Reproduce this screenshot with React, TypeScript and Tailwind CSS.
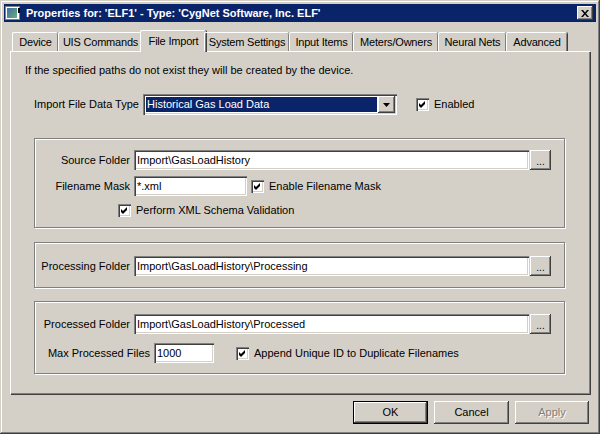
import React from "react";

const raised =
  "bg-[#d4d0c8] shadow-[inset_-1px_-1px_0_#404040,inset_1px_1px_0_#ffffff,inset_-2px_-2px_0_#808080,inset_2px_2px_0_#d4d0c8]";
const sunken =
  "bg-white shadow-[inset_1px_1px_0_#808080,inset_2px_2px_0_#404040,inset_-1px_-1px_0_#ffffff,inset_-2px_-2px_0_#d4d0c8]";

function CheckBox() {
  return (
    <div className={`w-[13px] h-[13px] shrink-0 flex items-center justify-center ${sunken}`}>
      <svg width="7" height="7" viewBox="0 0 7 7">
        <path d="M0 2 L2 4 L6 0 L6 3 L2 7 L0 5 Z" fill="#000" />
      </svg>
    </div>
  );
}

function TextBox({ value, w }: { value: string; w: string }) {
  return (
    <div className={`${w} h-[20px] ${sunken} flex items-center pl-[3px] text-black whitespace-nowrap`}>
      {value}
    </div>
  );
}

function Browse() {
  return (
    <div className={`ml-[1px] w-[21px] h-[20px] ${raised} flex items-end justify-center pb-[3px] text-[10px] leading-none`}>
      ...
    </div>
  );
}

function Label({ text, w = "w-[99px]" }: { text: string; w?: string }) {
  return <div className={`${w} text-right pr-[4px] whitespace-nowrap`}>{text}</div>;
}

const tabs = [
  { name: "Device", w: "w-[46px]" },
  { name: "UIS Commands", w: "w-[84px]" },
  { name: "File Import", w: "w-[62px]", active: true },
  { name: "System Settings", w: "w-[85px]" },
  { name: "Input Items", w: "w-[64px]" },
  { name: "Meters/Owners", w: "w-[85px]" },
  { name: "Neural Nets", w: "w-[68px]" },
  { name: "Advanced", w: "w-[61px]" },
];

const group =
  "ml-[23px] w-[531px] border border-[#808080] shadow-[inset_1px_1px_0_#ffffff,1px_1px_0_#ffffff]";

export default function App() {
  return (
    <div className="w-[600px] h-[434px] bg-[#d4d0c8] p-[4px] flex flex-col text-[11px] leading-[13px] text-black font-['Liberation_Sans',Arial,sans-serif] shadow-[inset_-1px_-1px_0_#404040,inset_1px_1px_0_#d4d0c8,inset_-2px_-2px_0_#808080,inset_2px_2px_0_#ffffff]">
      {/* Title bar */}
      <div className="h-[18px] bg-[#0a246a] flex items-center pl-[1px] pr-[3px]">
        <svg width="16" height="16" viewBox="0 0 16 16" className="shrink-0">
          <rect x="0.5" y="1.5" width="14" height="13" fill="#fff" stroke="#808080" />
          <rect x="2" y="3" width="10" height="10" fill="url(#g)" />
          <rect x="13" y="3" width="2" height="5" fill="#000" />
          <defs>
            <linearGradient id="g" x1="0" y1="0" x2="1" y2="1">
              <stop offset="0" stopColor="#3a6ea5" />
              <stop offset="1" stopColor="#6fae7a" />
            </linearGradient>
          </defs>
        </svg>
        <div className="ml-[5px] text-white font-bold whitespace-nowrap">
          Properties for: 'ELF1' - Type: 'CygNet Software, Inc. ELF'
        </div>
        <div className={`ml-auto w-[16px] h-[14px] ${raised} flex items-center justify-center`}>
          <svg width="8" height="7" viewBox="0 0 8 7">
            <path d="M0 0h2l2 2.5L6 0h2L5 3.5 8 7H6L4 4.5 2 7H0l3-3.5z" fill="#000" />
          </svg>
        </div>
      </div>

      {/* Tabs */}
      <div className="mt-[8px] ml-[6px] h-[21px] flex items-end pl-[2px] relative z-10 tracking-[-0.2px]">
        {tabs.map((t) =>
          t.active ? (
            <div
              key={t.name}
              className="-mx-[2px] -mb-[1px] w-[66px] h-[22px] bg-[#d4d0c8] border-t border-l border-white shadow-[inset_-1px_0_0_#808080,1px_0_0_#404040] rounded-t-[2px] flex items-start justify-center pt-[4px] whitespace-nowrap"
            >
              {t.name}
            </div>
          ) : (
            <div
              key={t.name}
              className={`${t.w} h-[19px] border-t border-l border-white shadow-[inset_-1px_0_0_#808080,1px_0_0_#404040] rounded-t-[2px] flex items-start justify-center pt-[3px] whitespace-nowrap`}
            >
              {t.name}
            </div>
          )
        )}
      </div>

      {/* Panel */}
      <div className="ml-[6px] w-[580px] h-[343px] border-t border-l border-white shadow-[inset_-1px_-1px_0_#808080,1px_1px_0_#404040] flex flex-col">
        <div className="mt-[12px] ml-[14px]">
          If the specified paths do not exist they will be created by the device.
        </div>

        <div className="mt-[17px] ml-[23px] flex items-center h-[21px]">
          <div className="w-[109px] whitespace-nowrap">Import File Data Type</div>
          <div className={`w-[254px] h-[21px] ${sunken} p-[2px] flex`}>
            <div className="flex-1 bg-[#0a246a] border border-white text-white pl-[1px] flex items-center">
              Historical Gas Load Data
            </div>
            <div className={`w-[17px] h-[17px] ${raised} flex items-center justify-center`}>
              <svg width="7" height="4" viewBox="0 0 7 4">
                <path d="M0 0h7L3.5 4z" fill="#000" />
              </svg>
            </div>
          </div>
          <div className="ml-[19px]">
            <CheckBox />
          </div>
          <div className="ml-[5px]">Enabled</div>
        </div>

        {/* Source group */}
        <div className={`mt-[23px] h-[90px] ${group} flex flex-col`}>
          <div className="mt-[11px] flex items-center">
            <Label text="Source Folder" />
            <TextBox value="Import\GasLoadHistory" w="w-[395px]" />
            <Browse />
          </div>
          <div className="mt-[6px] flex items-center">
            <Label text="Filename Mask" />
            <TextBox value="*.xml" w="w-[113px]" />
            <div className="ml-[4px]">
              <CheckBox />
            </div>
            <div className="ml-[5px]">Enable Filename Mask</div>
          </div>
          <div className="mt-[8px] ml-[83px] flex items-center">
            <CheckBox />
            <div className="ml-[5px]">Perform XML Schema Validation</div>
          </div>
        </div>

        {/* Processing group */}
        <div className={`mt-[14px] h-[46px] ${group} flex flex-col`}>
          <div className="mt-[13px] flex items-center">
            <Label text="Processing Folder" />
            <TextBox value="Import\GasLoadHistory\Processing" w="w-[395px]" />
            <Browse />
          </div>
        </div>

        {/* Processed group */}
        <div className={`mt-[13px] h-[73px] ${group} flex flex-col`}>
          <div className="mt-[12px] flex items-center">
            <Label text="Processed Folder" />
            <TextBox value="Import\GasLoadHistory\Processed" w="w-[395px]" />
            <Browse />
          </div>
          <div className="mt-[9px] flex items-center">
            <Label text="Max Processed Files" w="w-[119px]" />
            <TextBox value="1000" w="w-[60px]" />
            <div className="ml-[22px]">
              <CheckBox />
            </div>
            <div className="ml-[5px]">Append Unique ID to Duplicate Filenames</div>
          </div>
        </div>
      </div>

      {/* Buttons */}
      <div className="mt-[7px] mr-[7px] flex justify-end gap-[6px]">
        <div className="w-[75px] h-[23px] border border-black flex">
          <div className={`flex-1 ${raised} flex items-center justify-center`}>OK</div>
        </div>
        <div className={`w-[75px] h-[23px] ${raised} flex items-center justify-center`}>Cancel</div>
        <div className={`w-[74px] h-[23px] ${raised} flex items-center justify-center text-[#808080] [text-shadow:1px_1px_0_#ffffff]`}>
          Apply
        </div>
      </div>
    </div>
  );
}
